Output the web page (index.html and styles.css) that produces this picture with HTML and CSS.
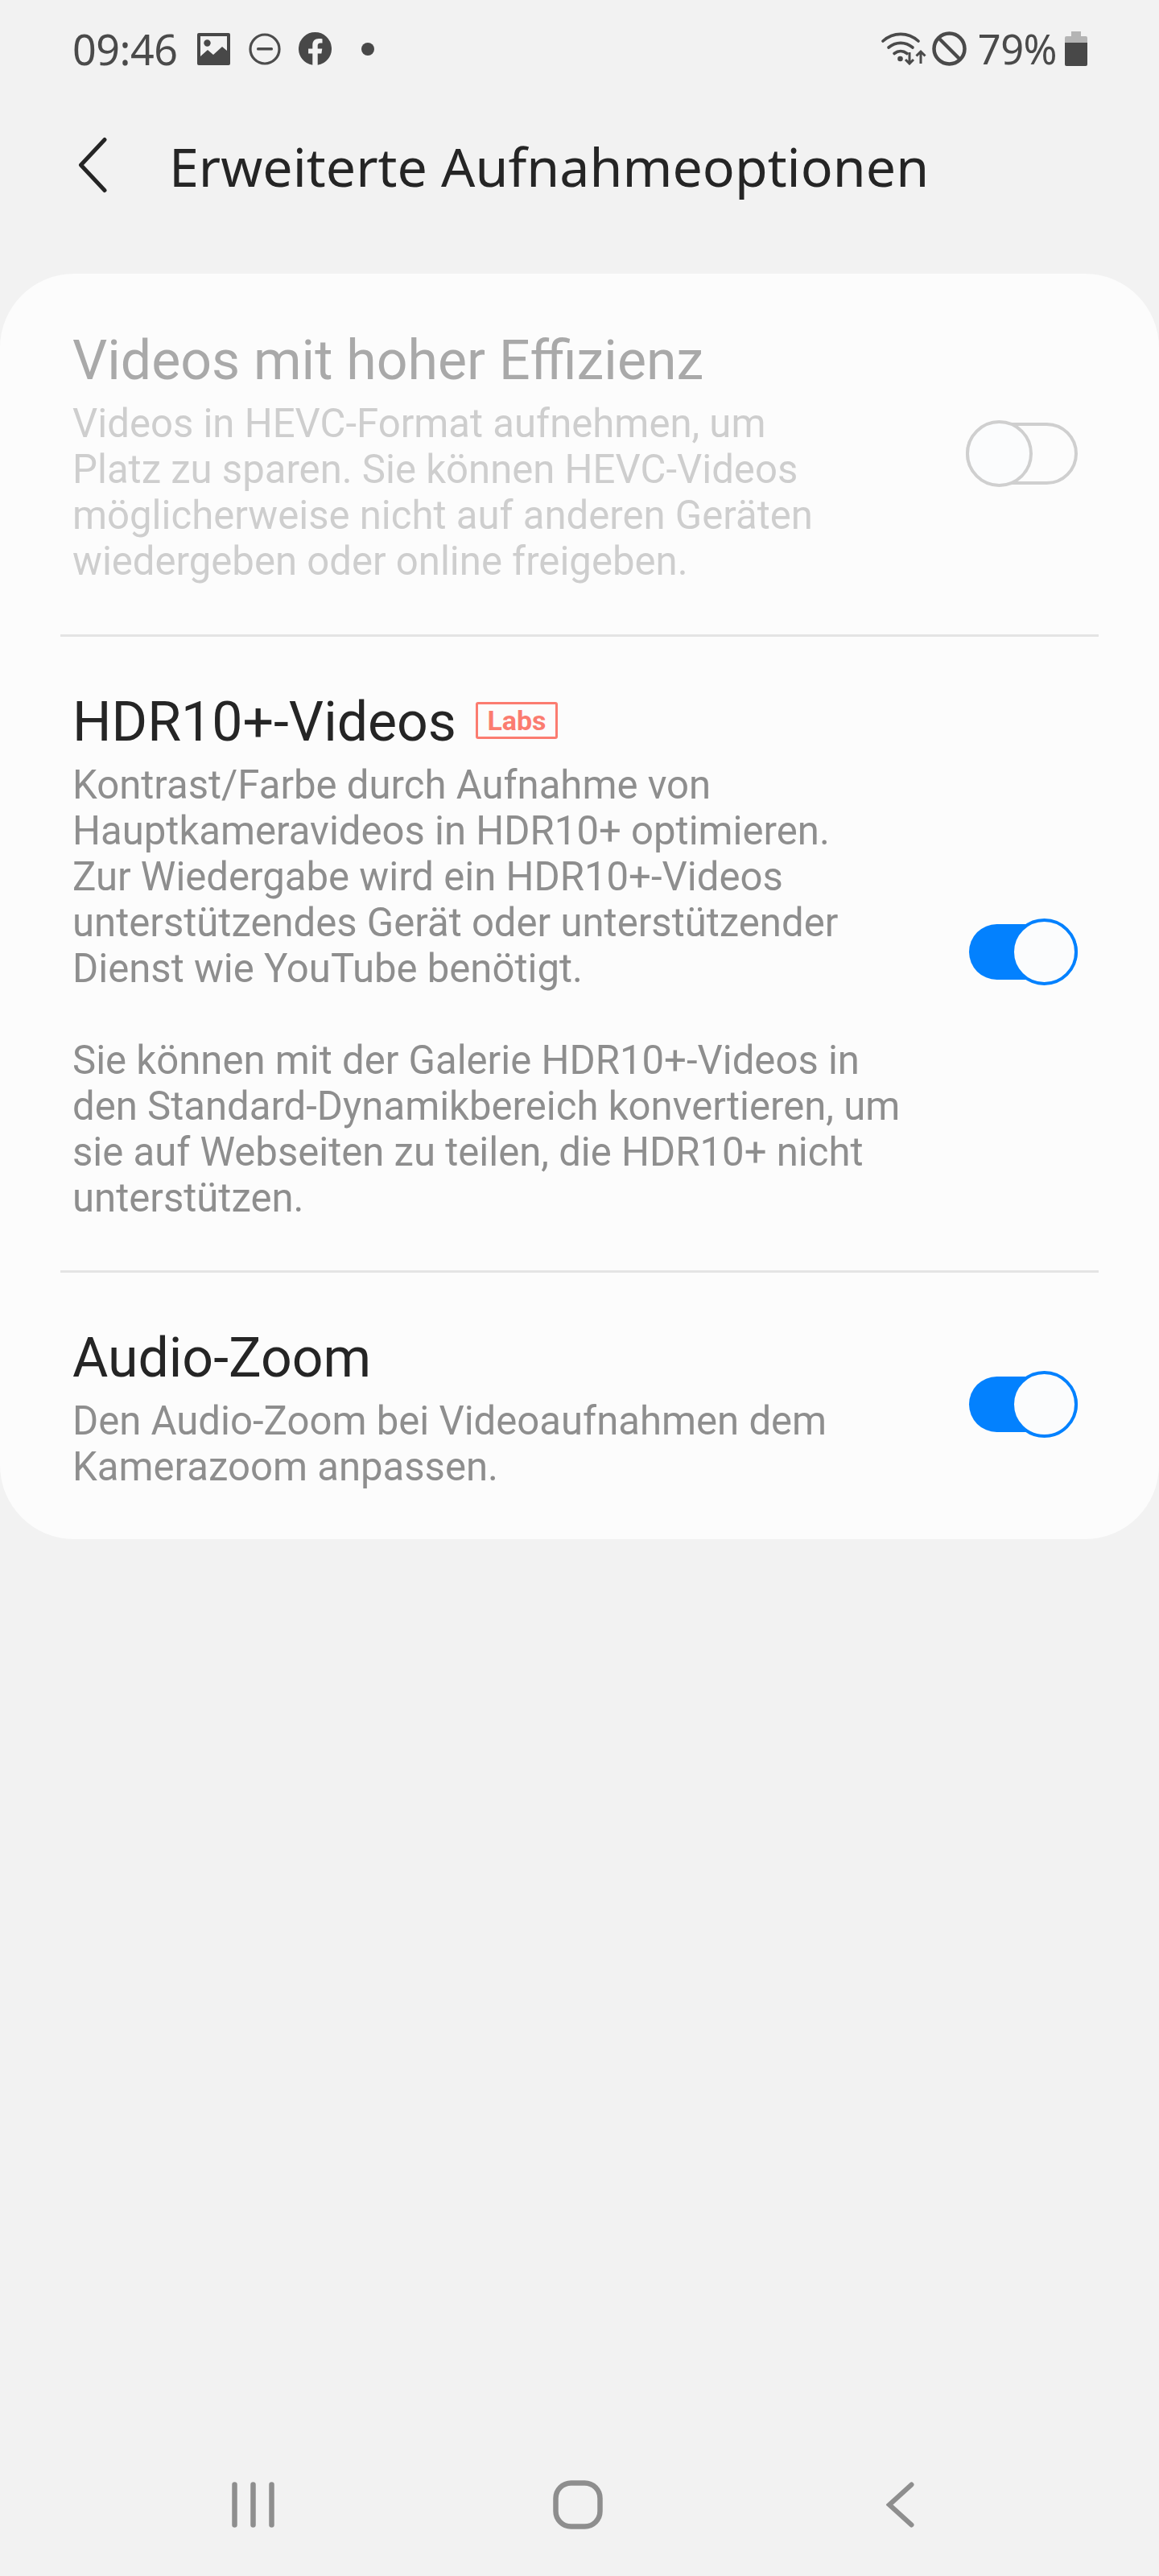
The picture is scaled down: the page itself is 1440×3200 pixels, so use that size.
FILE: index.html
```html
<!DOCTYPE html>
<html lang="de">
<head>
<meta charset="utf-8">
<title>Erweiterte Aufnahmeoptionen</title>
<link rel="stylesheet" href="styles.css">
</head>
<body>
<div class="screen">
  <div class="status">
    <div class="status-left">
      <span class="clock">09:46</span>
      <svg class="ic ic-pic" viewBox="0 0 41 40"><path fill="#484848" fill-rule="evenodd" d="M2 0h37a2 2 0 0 1 2 2v36a2 2 0 0 1-2 2H2a2 2 0 0 1-2-2V2a2 2 0 0 1 2-2zM4 4v25l9-8 7 6 11-10 6 5V4z"/><circle cx="12.500" cy="12.500" r="4.200" fill="#484848"/></svg>
      <svg class="ic ic-dnd" viewBox="0 0 40 40"><circle cx="20" cy="20" r="18" fill="none" stroke="#4c4c4c" stroke-width="3.200"/><rect x="10" y="18" width="20" height="3.600" rx="1.500" fill="#4c4c4c"/></svg>
      <svg class="ic ic-fb" viewBox="0 0 41 41"><path fill="#484848" d="M20.500 0a20.500 20.500 0 0 0-3.200 40.750V26.400h-5.200v-5.900h5.200v-4.500c0-5.100 3-8 7.700-8 2.200 0 4.500.4 4.500.4v5h-2.500c-2.500 0-3.300 1.600-3.300 3.200v3.900h5.600l-.9 5.900h-4.700v14.350A20.500 20.500 0 0 0 20.500 0z"/></svg>
      <span class="dot"></span>
    </div>
    <div class="status-right">
      <svg class="ic ic-wifi" viewBox="0 0 56 41"><g fill="none" stroke="#4a4a4a" stroke-linecap="round" stroke-width="3.600"><path d="M2 11C15-.5 33-.5 46 11"/><path d="M9 19c9-7.500 21-7.500 30 0"/><path d="M16 26.500c5-4 11-4 16 0"/></g><circle cx="23.500" cy="33" r="3.300" fill="#4a4a4a"/><g fill="none" stroke="#4a4a4a" stroke-width="3"><path d="M35 25v14M30 34l5 5 5-5"/><path d="M49 39V24M43.500 29.500L49 24l5.500 5.500"/></g></svg>
      <svg class="ic ic-block" viewBox="0 0 43 43"><circle cx="21.500" cy="21.500" r="19" fill="none" stroke="#4a4a4a" stroke-width="4.500"/><path d="M8 8l27 27" stroke="#4a4a4a" stroke-width="4.500"/></svg>
      <span class="batt-text">79%</span>
      <svg class="ic ic-batt" viewBox="0 0 28 43"><path fill="#b4b4b4" d="M8 0h12v6h6a2 2 0 0 1 2 2v7H0V8a2 2 0 0 1 2-2h6z"/><path fill="#484848" d="M0 14h28v27a2 2 0 0 1-2 2H2a2 2 0 0 1-2-2z"/></svg>
    </div>
  </div>

  <header class="appbar">
    <svg class="back" viewBox="0 0 37 70"><path d="M33 3.500L3.500 35 33 66.500" fill="none" stroke="#252525" stroke-width="5" stroke-linecap="round" stroke-linejoin="round"/></svg>
    <h1 class="page-title">Erweiterte Aufnahmeoptionen</h1>
  </header>

  <main class="card">
    <section class="row row-disabled">
      <div class="row-text">
        <h2 class="row-title">Videos mit hoher Effizienz</h2>
        <p class="row-desc">Videos in HEVC-Format aufnehmen, um<br>Platz zu sparen. Sie können HEVC-Videos<br>möglicherweise nicht auf anderen Geräten<br>wiedergeben oder online freigeben.</p>
      </div>
      <div class="switch switch-off"><span class="thumb"></span></div>
    </section>
    <hr class="divider">
    <section class="row">
      <div class="row-text">
        <h2 class="row-title">HDR10+-Videos<span class="labs">Labs</span></h2>
        <p class="row-desc">Kontrast/Farbe durch Aufnahme von<br>Hauptkameravideos in HDR10+ optimieren.<br>Zur Wiedergabe wird ein HDR10+-Videos<br>unterstützendes Gerät oder unterstützender<br>Dienst wie YouTube benötigt.<br><br>Sie können mit der Galerie HDR10+-Videos in<br>den Standard-Dynamikbereich konvertieren, um<br>sie auf Webseiten zu teilen, die HDR10+ nicht<br>unterstützen.</p>
      </div>
      <div class="switch switch-on"><span class="thumb"></span></div>
    </section>
    <hr class="divider">
    <section class="row">
      <div class="row-text">
        <h2 class="row-title">Audio-Zoom</h2>
        <p class="row-desc">Den Audio-Zoom bei Videoaufnahmen dem<br>Kamerazoom anpassen.</p>
      </div>
      <div class="switch switch-on"><span class="thumb"></span></div>
    </section>
  </main>

  <nav class="navbar">
    <div class="nav-cell"><svg class="nav-recents" viewBox="0 0 53 57"><g stroke="#8e8e8e" stroke-width="6.500" stroke-linecap="round"><path d="M3.500 3.500v50M26.500 3.500v50M49.500 3.500v50"/></g></svg></div>
    <div class="nav-cell"><svg class="nav-home" viewBox="0 0 62 61"><rect x="3.500" y="3.500" width="55" height="54" rx="19" fill="none" stroke="#8e8e8e" stroke-width="6.500"/></svg></div>
    <div class="nav-cell"><svg class="nav-back" viewBox="0 0 35 57"><path d="M31.500 3.500L4 28.500l27.500 25" fill="none" stroke="#8e8e8e" stroke-width="6" stroke-linecap="round" stroke-linejoin="miter"/></svg></div>
  </nav>
</div>
</body>
</html>
```
FILE: styles.css
```css
* { box-sizing: border-box; }
html, body { margin: 0; padding: 0; }
body {
  background: #f2f2f2;
  font-family: Roboto, "Liberation Sans", sans-serif;
}
.screen {
  width: 1440px;
  height: 3200px;
  display: flex;
  flex-direction: column;
}
.status {
  height: 122px;
  padding: 39px 89px 0 90px;
  display: flex;
  justify-content: space-between;
  align-items: flex-start;
}
.status-left, .status-right {
  height: 43px;
  display: flex;
  align-items: center;
}
.clock, .batt-text {
  font-family: "Noto Sans", sans-serif;
  font-weight: 400;
  font-size: 52px;
  line-height: 43px;
  letter-spacing: -0.5px;
  color: #4a4a4a;
}
.ic { display: block; flex: none; }
.ic-pic { width: 41px; height: 40px; margin-left: 25px; }
.ic-dnd { width: 40px; height: 40px; margin-left: 23px; }
.ic-fb { width: 41px; height: 41px; margin-left: 22px; }
.dot { width: 16px; height: 16px; border-radius: 50%; background: #484848; margin-left: 37px; }
.ic-wifi { width: 56px; height: 41px; }
.ic-block { width: 43px; height: 43px; margin-left: 7px; }
.status-right .batt-text { margin-left: 14px; font-size: 50.5px; }
.ic-batt { width: 28px; height: 43px; margin-left: 10px; }
.appbar {
  height: 172px;
  padding: 14px 0 0 97px;
  display: flex;
  align-items: flex-start;
  margin-bottom: 46px;
}
.back { width: 37px; height: 70px; flex: none; margin-top: 34px; }
.page-title {
  margin: 22px 0 0 76px;
  font-family: "Noto Sans", sans-serif;
  font-weight: 400;
  font-size: 66.3px;
  line-height: 96px;
  color: #252525;
}
.card {
  background: #fcfcfc;
  border-radius: 92px;
  display: flex;
  flex-direction: column;
}
.row {
  padding: 70px 101px 61px 90px;
  display: flex;
  justify-content: space-between;
  align-items: center;
}
.row-title {
  margin: 0 0 14px;
  font-weight: 400;
  font-size: 68px;
  line-height: 72px;
  color: #252525;
  display: flex;
  align-items: center;
}
.row-desc {
  margin: 0;
  font-size: 49.1px;
  line-height: 57px;
  color: #8e8e8e;
}
.row-disabled { padding-top: 72px; padding-bottom: 62px; }
.row-disabled .row-title { color: #a9a9a9; }
.row-disabled .row-desc { color: #cecece; }
.divider {
  flex: none;
  height: 3px;
  margin: 0 75px;
  border: 0;
  background: #e4e4e4;
}
.labs {
  margin-left: 24px;
  width: 102px;
  height: 46px;
  border: 3px solid #fb7c70;
  border-radius: 3px;
  color: #fb7c70;
  font-size: 34px;
  font-weight: 700;
  line-height: 40px;
  text-align: center;
  position: relative;
  top: -2px;
}
.switch {
  flex: none;
  width: 139px;
  height: 83px;
  margin-bottom: 13px;
  position: relative;
}
.row-disabled .switch { margin-bottom: 12px; }
.switch::before {
  content: "";
  position: absolute;
  border-radius: 40px;
}
.switch-off::before {
  inset: 3px 0;
  border: 4px solid #cfcfcf;
}
.switch-on::before {
  inset: 7px 0 7px 4px;
  background: #0381fe;
}
.thumb {
  position: absolute;
  top: 0;
  width: 83px;
  height: 83px;
  border-radius: 50%;
  background: #fbfcfd;
}
.switch-off .thumb { left: 0; border: 4px solid #cfcfcf; }
.switch-on .thumb { right: 0; border: 4px solid #0381fe; }
.navbar {
  margin-top: auto;
  height: 119px;
  padding: 0 0 0 113px;
  display: grid;
  grid-template-columns: 403px 403px 403px;
  align-items: start;
}
.nav-cell { display: flex; justify-content: center; }
.nav-recents { width: 53px; height: 57px; margin-top: 2px; }
.nav-home { width: 62px; height: 61px; }
.nav-back { width: 35px; height: 57px; margin-top: 2px; margin-right: 4px; }
```
